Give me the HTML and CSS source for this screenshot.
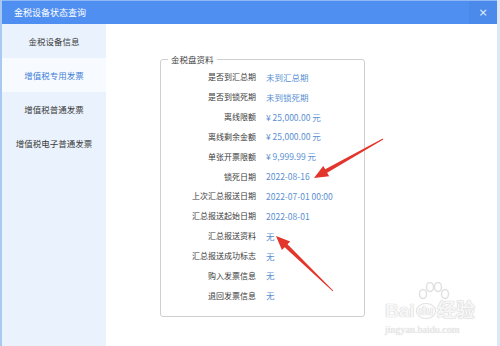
FILE: index.html
```html
<!DOCTYPE html>
<html lang="zh-CN">
<head>
<meta charset="utf-8">
<title>金税设备状态查询</title>
<link rel="stylesheet" href="styles.css">
</head>
<body>
<div class="window">
  <div class="titlebar">
    <span class="title">金税设备状态查询</span>
    <span class="close">×</span>
  </div>
  <div class="main">
    <nav class="sidebar">
      <div class="nav-item">金税设备信息</div>
      <div class="nav-item active">增值税专用发票</div>
      <div class="nav-item">增值税普通发票</div>
      <div class="nav-item">增值税电子普通发票</div>
    </nav>
    <div class="content">
      <fieldset class="panel">
        <legend>金税盘资料</legend>
        <div class="grid">
          <span class="lbl">是否到汇总期</span><span class="val">未到汇总期</span>
          <span class="lbl">是否到锁死期</span><span class="val">未到锁死期</span>
          <span class="lbl">离线限额</span><span class="val">¥ 25,000.00 元</span>
          <span class="lbl">离线剩余金额</span><span class="val">¥ 25,000.00 元</span>
          <span class="lbl">单张开票限额</span><span class="val">¥ 9,999.99 元</span>
          <span class="lbl">锁死日期</span><span class="val">2022-08-16</span>
          <span class="lbl">上次汇总报送日期</span><span class="val">2022-07-01 00:00</span>
          <span class="lbl">汇总报送起始日期</span><span class="val">2022-08-01</span>
          <span class="lbl">汇总报送资料</span><span class="val">无</span>
          <span class="lbl">汇总报送成功标志</span><span class="val">无</span>
          <span class="lbl">购入发票信息</span><span class="val">无</span>
          <span class="lbl">退回发票信息</span><span class="val">无</span>
        </div>
      </fieldset>
    </div>
  </div>
  <div class="watermark">
    <svg class="paw" width="40" height="26" viewBox="0 0 40 26">
      <g fill="none" stroke="#dcdcdc" stroke-width="1.5">
        <ellipse cx="10" cy="12" rx="3.5" ry="4.5"/>
        <ellipse cx="17" cy="5" rx="3.5" ry="4.5"/>
        <ellipse cx="25" cy="5" rx="3.5" ry="4.5"/>
        <ellipse cx="32" cy="12" rx="3.5" ry="4.5"/>
      </g>
    </svg>
    <div class="wm-brand"><span>Bai</span><span class="du">du</span><span>经验</span></div>
    <div class="wm-url">jingyan.baidu.com</div>
  </div>
  <svg class="arrows" width="500" height="346" viewBox="0 0 500 346">
    <polygon fill="#e2352c" points="383.25,139.44 327.17,172.85 329.14,176.33 314,178 323.24,165.89 325.21,169.37 382.75,138.56"/>
    <polygon fill="#e2352c" points="332.65,291.36 284.69,247.16 281.91,250.04 276,236 290.25,241.40 287.47,244.28 333.35,290.64"/>
  </svg>
</div>
</body>
</html>
```

FILE: styles.css
```css
html, body {
  margin: 0;
  padding: 0;
  background: #ffffff;
}

body {
  font-family: "Noto Sans CJK SC", "Noto Sans", sans-serif;
  font-size: 8.5px;
  color: #3a3a3a;
}

.window {
  position: relative;
  width: 500px;
  height: 346px;
  box-sizing: border-box;
  border-left: 2px solid #a9c9f1;
  border-right: 3px solid #dbe8f8;
  display: flex;
  flex-direction: column;
  overflow: hidden;
}

.titlebar {
  height: 24px;
  box-sizing: border-box;
  border-top: 1px solid #8fb8f5;
  background: #4f8ff1;
  display: flex;
  align-items: center;
  justify-content: space-between;
  padding-left: 12px;
  color: #ffffff;
}

.title {
  font-size: 9px;
  line-height: 12px;
}

.close {
  width: 28px;
  height: 23px;
  display: flex;
  align-items: center;
  justify-content: center;
  background: #4b8aeb;
  font-family: "DejaVu Sans", sans-serif;
  font-size: 11px;
  color: #e8f0fd;
}

.main {
  flex: 1;
  display: flex;
}

.sidebar {
  width: 104px;
  background: #eaf3fd;
  display: flex;
  flex-direction: column;
}

.nav-item {
  height: 34px;
  display: flex;
  align-items: center;
  justify-content: center;
  font-size: 8.5px;
  color: #3a3a3a;
}

.nav-item.active {
  background: #f7fbff;
  color: #3f80d8;
}

.content {
  flex: 1;
  padding: 29px 0 0 54px;
}

.panel {
  margin: 0;
  width: 205px;
  height: 264px;
  box-sizing: border-box;
  padding: 2px 0 0 0;
  border: 1px solid #cfcfcf;
  border-radius: 3px;
}

.panel legend {
  margin-left: 7px;
  padding: 0 3px;
  font-size: 8.5px;
  line-height: 12px;
  color: #444444;
}

.grid {
  display: grid;
  grid-template-columns: 95px auto;
  grid-auto-rows: 19.85px;
  column-gap: 10px;
  align-items: center;
}

.lbl {
  text-align: right;
  font-size: 8px;
  color: #3a3a3a;
  white-space: nowrap;
}

.val {
  color: #5a8fd2;
  white-space: nowrap;
}

.watermark {
  position: absolute;
  left: 383px;
  top: 282px;
  width: 110px;
  display: flex;
  flex-direction: column;
  align-items: flex-start;
  opacity: 0.85;
}

.paw {
  margin-left: 28px;
}

.wm-brand {
  margin-top: -8px;
  font-family: "Liberation Sans", sans-serif;
  font-size: 19px;
  font-weight: bold;
  line-height: 22px;
  color: #f6f6f6;
  text-shadow: 0 0 1px #c4c4c4, 0 0 1px #c4c4c4;
  display: flex;
  align-items: center;
  gap: 1px;
}

.wm-brand .du {
  font-size: 12px;
  border: 1.5px solid #dcdcdc;
  border-radius: 50%;
  padding: 0 2px;
  line-height: 14px;
}

.wm-url {
  font-family: "Liberation Serif", serif;
  font-size: 10px;
  color: #e6e6e6;
  text-shadow: 0 0 1px #cacaca;
  margin-top: 2px;
}

.arrows {
  position: absolute;
  left: -2px;
  top: 0;
  pointer-events: none;
}
```
